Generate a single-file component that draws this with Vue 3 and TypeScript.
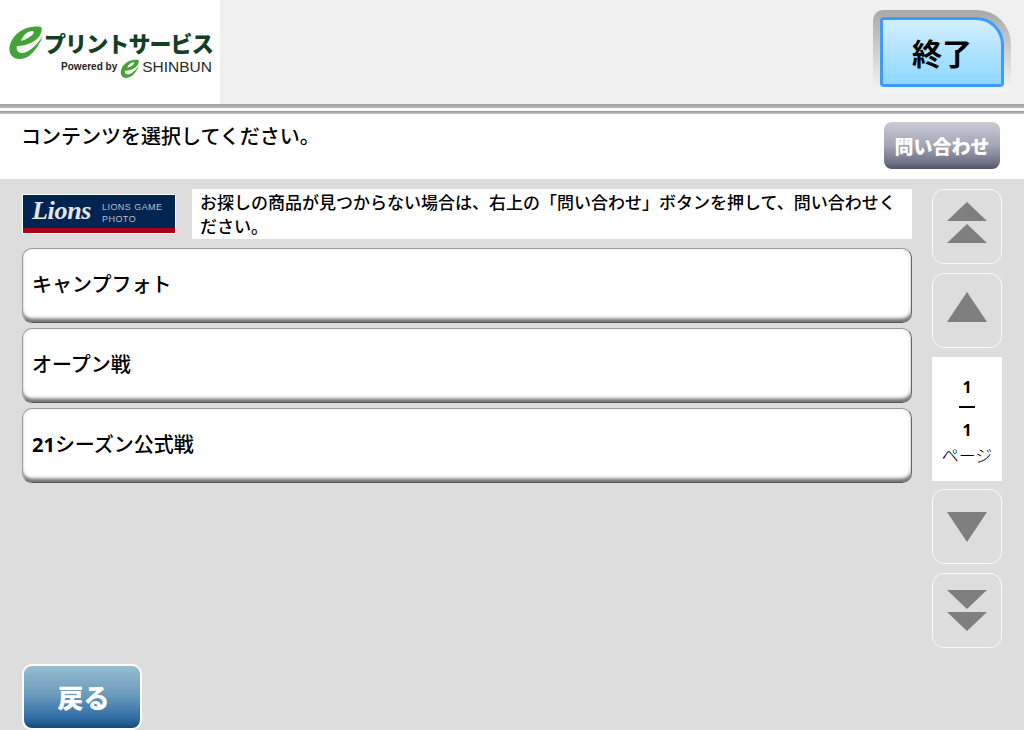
<script setup lang="ts">
interface Row { digits?: string; label: string }
const rows: Row[] = [
  { label: 'キャンプフォト' },
  { label: 'オープン戦' },
  { digits: '21', label: 'シーズン公式戦' },
]
const eMark =
  'M33 1C24-1 10 3 4 14C-1 23 1 33 12 33C21 33 29 24 35 10C28 20 20 27 14 27C9 27 8 23 9 20C20 20 31 14 33 7C34 4 34 2 33 1ZM13 15C15 9 20 5 24 5C28 5 25 11 13 15Z'
</script>

<template>
  <div class="page">
    <header class="top">
      <div class="logo">
        <div class="logo-main">
          <svg class="e-big" viewBox="0 0 36 34" width="36" height="34" aria-hidden="true">
            <path :d="eMark" fill="#43a338" fill-rule="evenodd" />
          </svg>
          <span class="logo-title">プリントサービス</span>
        </div>
        <div class="logo-sub">
          <span class="powered">Powered by</span>
          <svg class="e-small" viewBox="0 0 36 34" width="20" height="20" aria-hidden="true">
            <path :d="eMark" fill="#43a338" fill-rule="evenodd" />
          </svg>
          <span class="shinbun">SHINBUN</span>
        </div>
      </div>
      <div class="end-frame">
        <button class="end-btn">終了</button>
      </div>
    </header>
    <div class="rule"></div>
    <div class="title-bar">
      <h1 class="title">コンテンツを選択してください。</h1>
      <button class="ask-btn">問い合わせ</button>
    </div>
    <main class="body">
      <section class="left">
        <div class="info">
          <div class="banner">
            <span class="banner-logo">Lions</span>
            <span class="banner-text">LIONS GAME<br />PHOTO</span>
          </div>
          <p class="note">お探しの商品が見つからない場合は、右上の「問い合わせ」ボタンを押して、問い合わせください。</p>
        </div>
        <button v-for="r in rows" :key="r.label" class="row"><span v-if="r.digits" class="digits">{{ r.digits }}</span>{{ r.label }}</button>
      </section>
      <aside class="pager">
        <button class="nav up">
          <svg viewBox="0 0 40 42" width="40" height="42"><path d="M20 0 L40 19 L0 19 Z M20 22 L40 41 L0 41 Z" fill="#7f7f7f" /></svg>
        </button>
        <button class="nav up">
          <svg viewBox="0 0 40 30" width="40" height="30"><path d="M20 0 L40 30 L0 30 Z" fill="#7f7f7f" /></svg>
        </button>
        <div class="count">
          <span class="num">1</span>
          <span class="bar"></span>
          <span class="num">1</span>
          <span class="unit">ページ</span>
        </div>
        <button class="nav">
          <svg viewBox="0 0 40 30" width="40" height="30"><path d="M0 0 L40 0 L20 30 Z" fill="#7f7f7f" /></svg>
        </button>
        <button class="nav">
          <svg viewBox="0 0 40 42" width="40" height="42"><path d="M0 0 L40 0 L20 19 Z M0 22 L40 22 L20 41 Z" fill="#7f7f7f" /></svg>
        </button>
      </aside>
    </main>
    <footer class="foot">
      <button class="back">戻る</button>
    </footer>
  </div>
</template>

<style>
html, body { margin: 0; padding: 0; }
</style>

<style scoped>
.page {
  width: 1024px;
  height: 730px;
  overflow: hidden;
  display: flex;
  flex-direction: column;
  background: #dddddd;
  color: #000;
  font-family: "Noto Sans CJK JP", "Noto Sans", sans-serif;
}
button { font-family: inherit; padding: 0; cursor: pointer; }
.top {
  height: 104px;
  flex: none;
  display: flex;
  justify-content: space-between;
  background: #f0f0f0;
}
.logo {
  width: 220px;
  background: #fff;
  box-sizing: border-box;
  padding: 26px 8px 0 8px;
  display: flex;
  flex-direction: column;
}
.logo-main { display: flex; align-items: center; height: 34px; }
.e-big { flex: none; }
.logo-title {
  font-size: 22px;
  line-height: 34px;
  font-weight: 900;
  color: #143f24;
  letter-spacing: -0.9px;
  white-space: nowrap;
  margin-bottom: 3px;
}
.logo-sub { display: flex; align-items: center; justify-content: flex-end; height: 20px; margin-top: -1px; }
.powered { font: bold 10px/20px "Liberation Sans", sans-serif; color: #222; margin-right: 3px; margin-top: -4px; }
.e-small { margin-right: 2px; }
.shinbun { font: 15.5px/20px "Liberation Sans", sans-serif; color: #2a2a2a; margin-top: -4px; }
.end-frame {
  width: 138px;
  height: 83px;
  box-sizing: border-box;
  margin: 10px 13px 0 0;
  padding: 7px;
  border-radius: 10px 34px 10px 10px;
  background: linear-gradient(#a8a8a8, #d8d8d8 60%, #f6f6f6);
}
.end-btn {
  width: 124px;
  height: 70px;
  box-sizing: border-box;
  border: 3px solid #3d9bfd;
  border-radius: 4px 28px 4px 4px;
  background: linear-gradient(#d2efff, #8fd7ff);
  font-size: 30px;
  font-weight: 700;
  color: #000;
}
.rule {
  height: 10px;
  flex: none;
  background: linear-gradient(#a0a0a0 0, #b8b8b8 4px, #fff 4px 7px, #8f8f8f 7px, #c8c8c8 10px);
}
.title-bar {
  height: 65px;
  flex: none;
  background: #fff;
  display: flex;
  justify-content: space-between;
  box-sizing: border-box;
  padding: 7px 24px 0 21px;
}
.ask-btn { margin-top: 1px; }
.title { margin: 0; font-size: 20px; line-height: 30px; font-weight: 500; }
.ask-btn {
  width: 116px;
  height: 47px;
  border: none;
  border-radius: 8px;
  background: linear-gradient(#c9cbd6, #a3a5b5 50%, #6d7086 88%, #4f5164);
  color: #fff;
  font-size: 19px;
  font-weight: 900;
}
.body {
  flex: 1;
  min-height: 0;
  display: flex;
  gap: 20px;
  padding: 10px 22px 0;
}
.left { width: 890px; display: flex; flex-direction: column; gap: 5px; }
.info { display: flex; align-items: flex-start; gap: 16px; margin-bottom: 4px; }
.banner {
  flex: none;
  width: 154px;
  height: 40px;
  margin-top: 5px;
  box-sizing: border-box;
  border: 1px solid #fff;
  background: linear-gradient(#002451 0 33px, #a80012 33px);
  display: flex;
  align-items: flex-start;
  padding-left: 9px;
  overflow: hidden;
}
.banner-logo {
  font: italic bold 26px/32px "Liberation Serif", serif;
  color: #e6e6e6;
  width: 70px;
  flex: none;
  letter-spacing: -0.3px;
}
.banner-text {
  font: 9px/12px "Liberation Sans", sans-serif;
  letter-spacing: 0.45px;
  color: #b5c0cf;
  padding-top: 6px;
  white-space: nowrap;
}
.note {
  margin: 0;
  width: 720px;
  height: 50px;
  box-sizing: border-box;
  background: #fff;
  padding: 1px 8px;
  font-size: 17px;
  line-height: 24px;
  font-weight: 500;
}
.row {
  height: 75px;
  flex: none;
  box-sizing: border-box;
  border: 1px solid #9a9a9a;
  border-right-color: #666;
  border-bottom-color: #555;
  border-radius: 10px;
  background: #fff;
  box-shadow: inset 0 -4px 3px -1px #777, inset -1px -6px 5px -3px #bbb;
  text-align: left;
  padding: 0 9px 4px;
  font-size: 20px;
  font-weight: 500;
  color: #000;
}
.digits { font: bold 20px "Open Sans", sans-serif; }
.pager { width: 70px; display: flex; flex-direction: column; }
.nav {
  width: 70px;
  height: 75px;
  flex: none;
  box-sizing: border-box;
  border: 1px solid #fafafa;
  border-radius: 12px;
  background: #dddddd;
  display: flex;
  align-items: center;
  justify-content: center;
  margin-bottom: 9px;
}
.up { padding-bottom: 8px; }
.count {
  height: 124px;
  flex: none;
  background: #fff;
  margin-bottom: 8px;
  display: flex;
  flex-direction: column;
  align-items: center;
  padding-top: 20px;
  box-sizing: border-box;
}
.num { font: bold 16px/20px "Open Sans", sans-serif; }
.bar { width: 16px; height: 2px; background: #000; margin: 9px 0 12px; flex: none; }
.unit { font-size: 17px; line-height: 20px; margin-top: 5px; font-weight: 300; }
.foot { height: 66px; flex: none; padding-left: 22px; }
.back {
  width: 120px;
  height: 66px;
  box-sizing: border-box;
  border: 2px solid #fff;
  border-radius: 10px;
  background: linear-gradient(#96bdd1, #6d9cbd 45%, #2e6ca6 85%, #164a78);
  color: #fff;
  font-size: 26px;
  font-weight: 900;
  padding: 0 0 2px 3px;
}
</style>
